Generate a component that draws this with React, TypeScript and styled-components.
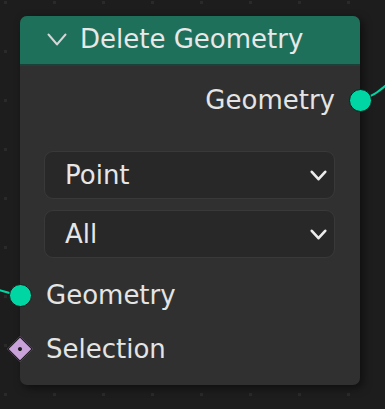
import React from 'react';
import styled, { createGlobalStyle } from 'styled-components';

const GlobalStyle = createGlobalStyle`
  html, body {
    margin: 0;
    padding: 0;
    background: #1d1d1d;
  }
  * {
    box-sizing: border-box;
  }
`;

const Canvas = styled.div`
  position: relative;
  width: 385px;
  height: 409px;
  overflow: hidden;
  background-color: #1d1d1d;
  background-image:
    linear-gradient(90deg, #1d1d1d 46px, transparent 46px),
    linear-gradient(#1d1d1d 46px, #2a2a2a 46px);
  background-size: 49px 49px;
  background-position: 7px 4px;
  font-family: 'DejaVu Sans', 'Liberation Sans', sans-serif;
  color: #e4e4e4;
`;

const Links = styled.svg`
  position: absolute;
  left: 0;
  top: 0;
  width: 385px;
  height: 409px;
`;

const Node = styled.div`
  position: absolute;
  left: 20px;
  top: 16px;
  width: 340px;
  height: 369px;
  border-radius: 7px;
  background: #303030;
  box-shadow: 3px 3px 8px rgba(0, 0, 0, 0.5);
  display: flex;
  flex-direction: column;
`;

const Header = styled.div`
  height: 50px;
  display: flex;
  align-items: center;
  gap: 13px;
  padding: 0 0 2px 27px;
  background: #1e705b;
  border-bottom: 2px solid #1a4238;
  border-radius: 7px 7px 0 0;
  font-size: 26px;
  color: #e8e8e8;
`;

const Body = styled.div`
  display: flex;
  flex-direction: column;
  padding: 12px 0 9px;
`;

const Row = styled.div<{ $side: 'in' | 'out' }>`
  position: relative;
  height: ${(p) => (p.$side === 'out' ? 44 : 54)}px;
  display: flex;
  align-items: center;
  justify-content: ${(p) => (p.$side === 'out' ? 'flex-end' : 'flex-start')};
  padding: ${(p) => (p.$side === 'out' ? '0 25px 0 0' : '0 0 0 26px')};
  font-size: 26px;
`;

const Socket = styled.span<{ $side: 'in' | 'out' }>`
  position: absolute;
  top: 50%;
  ${(p) => (p.$side === 'out' ? 'right: -11.5px;' : 'left: -11.5px;')}
  width: 23px;
  height: 23px;
  margin-top: -11.5px;
  border-radius: 50%;
  background: #00d6a3;
  border: 1.5px solid #171717;
`;

const Diamond = styled.span`
  position: absolute;
  top: 50%;
  left: -9px;
  width: 18px;
  height: 18px;
  margin-top: -9px;
  transform: rotate(45deg);
  background: #c8a2d8;
  border: 1.5px solid #171717;
  display: flex;
  align-items: center;
  justify-content: center;

  &::after {
    content: '';
    width: 4px;
    height: 4px;
    border-radius: 50%;
    background: #1c1c1c;
  }
`;

const Inputs = styled.div`
  display: flex;
  flex-direction: column;
  gap: 11px;
  margin: 29px 25px 0 24px;
`;

const Select = styled.div`
  height: 48px;
  display: flex;
  align-items: center;
  justify-content: space-between;
  padding: 0 7px 0 20px;
  background: #282828;
  border: 1px solid #393939;
  border-radius: 9px;
  font-size: 26px;
  color: #e6e6e6;
`;

const SocketList = styled.div`
  display: flex;
  flex-direction: column;
  margin-top: 10px;
`;

const Chevron = ({ w, h, sw, color }: { w: number; h: number; sw: number; color: string }) => (
  <svg width={w} height={h} viewBox={`0 0 ${w} ${h}`}>
    <polyline
      points={`${sw / 2 + 0.5},${sw / 2 + 0.5} ${w / 2},${h - sw / 2 - 0.5} ${w - sw / 2 - 0.5},${sw / 2 + 0.5}`}
      fill="none"
      stroke={color}
      strokeWidth={sw}
      strokeLinecap="round"
      strokeLinejoin="round"
    />
  </svg>
);

export default function App() {
  return (
    <Canvas>
      <GlobalStyle />
      <Links viewBox="0 0 385 409">
        <path d="M 360 100 C 372 97 378 92 390 82" stroke="#00d6a3" strokeWidth={2} fill="none" />
        <path d="M -5 289 C 2 290 8 294 20 295" stroke="#00d6a3" strokeWidth={2} fill="none" />
      </Links>
      <Node>
        <Header>
          <Chevron w={20} h={13} sw={2.2} color="#d6d6d6" />
          <span>Delete Geometry</span>
        </Header>
        <Body>
          <Row $side="out">
            Geometry
            <Socket $side="out" />
          </Row>
          <Inputs>
            <Select>
              Point
              <Chevron w={17} h={11} sw={2.6} color="#ececec" />
            </Select>
            <Select>
              All
              <Chevron w={17} h={11} sw={2.6} color="#ececec" />
            </Select>
          </Inputs>
          <SocketList>
            <Row $side="in">
              <Socket $side="in" />
              Geometry
            </Row>
            <Row $side="in">
              <Diamond />
              Selection
            </Row>
          </SocketList>
        </Body>
      </Node>
    </Canvas>
  );
}
